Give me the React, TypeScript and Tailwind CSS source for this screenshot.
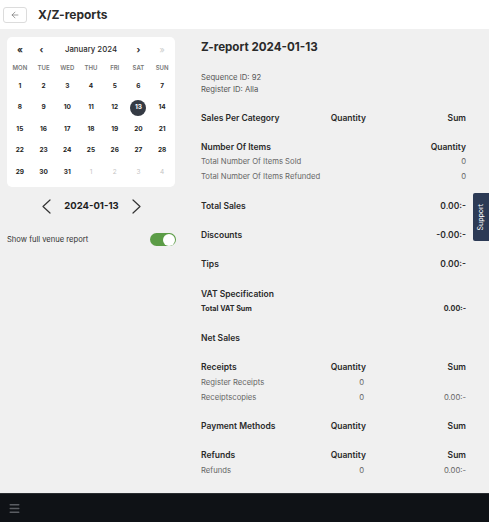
import { ArrowLeft, Menu } from 'lucide-react'

const dayNames = ['MON', 'TUE', 'WED', 'THU', 'FRI', 'SAT', 'SUN']

// January 2024 starts on a Monday
const days: { n: number; muted?: boolean }[] = [
    ...Array.from({ length: 31 }, (_, i) => ({ n: i + 1 })),
    { n: 1, muted: true },
    { n: 2, muted: true },
    { n: 3, muted: true },
    { n: 4, muted: true },
]

type Row = { label: string; qty?: string; sum?: string }
type Section = { title: string; qty?: string; sum?: string; rows?: Row[]; boldRows?: boolean }

const sections: Section[] = [
    { title: 'Sales Per Category', qty: 'Quantity', sum: 'Sum' },
    {
        title: 'Number Of Items',
        sum: 'Quantity',
        rows: [
            { label: 'Total Number Of Items Sold', sum: '0' },
            { label: 'Total Number Of Items Refunded', sum: '0' },
        ],
    },
    { title: 'Total Sales', sum: '0.00:-' },
    { title: 'Discounts', sum: '-0.00:-' },
    { title: 'Tips', sum: '0.00:-' },
    { title: 'VAT Specification', rows: [{ label: 'Total VAT Sum', sum: '0.00:-' }], boldRows: true },
    { title: 'Net Sales' },
    {
        title: 'Receipts',
        qty: 'Quantity',
        sum: 'Sum',
        rows: [
            { label: 'Register Receipts', qty: '0' },
            { label: 'Receiptscopies', qty: '0', sum: '0.00:-' },
        ],
    },
    { title: 'Payment Methods', qty: 'Quantity', sum: 'Sum' },
    { title: 'Refunds', qty: 'Quantity', sum: 'Sum', rows: [{ label: 'Refunds', qty: '0', sum: '0.00:-' }] },
]

function Chevron({ dir }: { dir: 'left' | 'right' }) {
    return (
        <svg width="9" height="15" viewBox="0 0 9 15" fill="none" stroke="#333" strokeWidth="1.2" strokeLinecap="round" strokeLinejoin="round">
            {dir === 'left' ? <polyline points="8,1 1,7.5 8,14" /> : <polyline points="1,1 8,7.5 1,14" />}
        </svg>
    )
}

export default function App() {
    return (
        <div className="h-[522px] flex flex-col bg-[#f0f0f0] text-[#2a2a2a] relative" style={{ fontFamily: 'Inter, "Noto Sans", sans-serif' }}>
            {/* Header */}
            <div className="h-[29px] bg-white flex items-center pl-[3px] gap-[11px] shrink-0">
                <button className="w-[24px] h-[16px] border border-[#dcdcdc] rounded-[3px] flex items-center justify-center text-[#666]">
                    <ArrowLeft className="w-[10px] h-[10px]" strokeWidth={1.5} />
                </button>
                <h1 className="text-[12px] font-bold text-[#2b2b2b]">X/Z-reports</h1>
            </div>

            <div className="flex-1 flex min-h-0">
                {/* Left column */}
                <div className="w-[176px] pl-[7px] pt-[8px] shrink-0">
                    <div className="w-[168px] bg-white rounded-[5px] px-[1px] pt-[6px] pb-[3px]">
                        <div className="grid grid-cols-7 h-[14px] items-center text-[#2b2b2b]">
                            <span className="text-center font-bold text-[9px]">«</span>
                            <span className="text-center font-bold text-[9px] -ml-[4px]">‹</span>
                            <span className="col-span-3 text-center text-[7.8px] font-medium">January 2024</span>
                            <span className="text-center font-bold text-[9px]">›</span>
                            <span className="text-center text-[9px] text-[#ccc]">»</span>
                        </div>
                        <div className="grid grid-cols-7 mt-[3px] h-[14px] items-center">
                            {dayNames.map(d => (
                                <span key={d} className="text-center text-[6px] font-semibold text-[#777]">{d}</span>
                            ))}
                        </div>
                        <div className="grid grid-cols-7 mt-[2px]">
                            {days.map((d, i) => (
                                <div key={i} className="h-[21.5px] flex items-center justify-center">
                                    {d.n === 13 && !d.muted ? (
                                        <span className="w-[16px] h-[16px] rounded-full bg-[#343a44] text-white text-[6.5px] font-bold flex items-center justify-center">13</span>
                                    ) : (
                                        <span className={`text-[6.5px] ${d.muted ? 'text-[#c4c4c4]' : 'font-bold text-[#1e1e1e]'}`}>{d.n}</span>
                                    )}
                                </div>
                            ))}
                        </div>
                    </div>

                    <div className="flex items-center justify-center gap-[13px] mt-[12px] h-[16px]">
                        <Chevron dir="left" />
                        <span className="text-[9.5px] font-bold text-[#1e1e1e]">2024-01-13</span>
                        <Chevron dir="right" />
                    </div>

                    <div className="flex items-center justify-between mt-[18px] h-[14px]">
                        <span className="text-[7.6px] text-[#333]">Show full venue report</span>
                        <div className="w-[26px] h-[13px] rounded-full bg-[#5b9c46] relative">
                            <span className="absolute right-[1px] top-[0.5px] w-[12px] h-[12px] rounded-full bg-white" />
                        </div>
                    </div>
                </div>

                {/* Report */}
                <div className="flex-1 pl-[25px] pr-[23px] pt-[9px]">
                    <h2 className="text-[11.6px] font-bold text-[#2a2a2a] h-[18px] leading-[18px]">Z-report 2024-01-13</h2>
                    <div className="mt-[16px] text-[7.7px] text-[#555] leading-[12px]">
                        <p>Sequence ID: 92</p>
                        <p>Register ID: Alla</p>
                    </div>
                    <div className="mt-[14.5px] flex flex-col gap-[14.2px]">
                        {sections.map(s => (
                            <div key={s.title}>
                                <div className="grid grid-cols-[65px_100px_100px] h-[15px] items-center text-[8.5px] font-semibold text-[#2a2a2a] whitespace-nowrap">
                                    <span>{s.title}</span>
                                    <span className="text-right">{s.qty}</span>
                                    <span className="text-right">{s.sum}</span>
                                </div>
                                {s.rows?.map(r => (
                                    <div
                                        key={r.label}
                                        className={`grid grid-cols-[65px_100px_100px] h-[15px] items-center whitespace-nowrap ${s.boldRows ? 'text-[7.2px] font-bold text-[#2a2a2a]' : 'text-[7.7px] text-[#666]'}`}
                                    >
                                        <span>{r.label}</span>
                                        <span className="text-right pr-[2px]">{r.qty}</span>
                                        <span className="text-right">{r.sum}</span>
                                    </div>
                                ))}
                            </div>
                        ))}
                    </div>
                </div>
            </div>

            {/* Support tab */}
            <div className="absolute right-0 top-[193px] w-[16px] h-[48px] bg-[#2c3a55] rounded-l-[2px] flex items-center justify-center">
                <span className="text-white text-[7px] -rotate-90 whitespace-nowrap">Support</span>
            </div>

            {/* Bottom bar */}
            <div className="h-[29px] bg-[#0f1216] border-t border-[#2a2d31] flex items-center pl-[8px] shrink-0">
                <Menu className="w-[13px] h-[13px] text-[#5a5d62]" strokeWidth={2.5} />
            </div>
        </div>
    )
}
